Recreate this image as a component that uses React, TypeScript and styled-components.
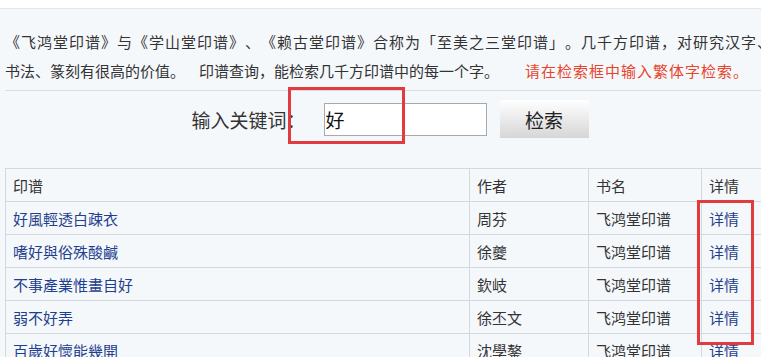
import styled, { createGlobalStyle } from "styled-components";

const GlobalStyle = createGlobalStyle`
  html, body {
    margin: 0;
    padding: 0;
    overflow: hidden;
    background: #f5f8fb;
  }
  body {
    font-family: "Noto Sans CJK SC", "Noto Sans", sans-serif;
    color: #333;
    text-spacing-trim: space-all;
  }
`

const TopBar = styled.div`
  height: 8px;
  overflow: hidden;
  background: #fff;
  border-bottom: 1px solid #dfe6ee;
`

const Title = styled.h2`
  margin: -24px 0 0 62px;
  font-size: 22px;
  line-height: 22px;
  font-weight: bold;
  color: #1d3a6e;
`

const Page = styled.div`
  width: 780px;
  padding: 0 5px;
  box-sizing: border-box;
`

const Intro = styled.div`
  padding: 18px 0 5px;
  font-size: 15px;
  line-height: 29px;
  border-bottom: 1px solid #d9dde2;
`

const IntroLine = styled.span<{ $spread?: boolean }>`
  display: block;
  white-space: nowrap;
  letter-spacing: ${p => (p.$spread ? "1px" : "0")};
`

const Sentence = styled.span<{ $gap: number }>`
  margin-left: ${p => p.$gap}px;
`

const Notice = styled(Sentence)`
  color: #e8442b;
  letter-spacing: 1px;
`

const SearchSection = styled.div`
  position: relative;
  padding: 9px 0 30px;
`

const SearchRow = styled.form`
  display: flex;
  align-items: center;
  justify-content: center;
  height: 38px;
  margin: 0;
`

const Label = styled.label`
  font-size: 19px;
  color: #333;
  margin-right: 18px;
`

const KeywordInput = styled.input`
  width: 163px;
  height: 33px;
  box-sizing: border-box;
  border: 1px solid #a9a9a9;
  background: #fff;
  padding: 0 1px;
  font-size: 19px;
  font-family: "Noto Sans CJK SC", sans-serif;
  color: #111;
  outline: none;
`

const SearchButton = styled.button`
  width: 89px;
  height: 38px;
  margin-left: 13px;
  border: none;
  background: linear-gradient(#ffffff, #d6d6d6);
  font-size: 19px;
  font-family: "Noto Sans CJK SC", sans-serif;
  color: #222;
  padding: 0;
`

const Highlight = styled.div<{ $top: number; $left: number; $w: number; $h: number }>`
  position: absolute;
  top: ${p => p.$top}px;
  left: ${p => p.$left}px;
  width: ${p => p.$w}px;
  height: ${p => p.$h}px;
  border: 3px solid #e33a3f;
  box-sizing: border-box;
  pointer-events: none;
`

const TableWrap = styled.div`
  position: relative;
`

const Table = styled.table`
  width: 100%;
  border-collapse: collapse;
  font-size: 15px;
  table-layout: fixed;
`

const Th = styled.th<{ $w?: number }>`
  width: ${p => (p.$w ? p.$w + "px" : "auto")};
  height: 33px;
  padding: 0 7px;
  border: 1px solid #d3d8de;
  text-align: left;
  font-weight: normal;
  color: #333;
  box-sizing: border-box;
`

const Td = styled.td`
  height: 33px;
  padding: 0 7px;
  border: 1px solid #d3d8de;
  color: #333;
  box-sizing: border-box;
  white-space: nowrap;
`

const CellLink = styled.a`
  color: #1f3f8f;
  text-decoration: none;
`

const rows = [
  { seal: "好風輕透白疎衣", author: "周芬" },
  { seal: "嗜好與俗殊酸鹹", author: "徐夔" },
  { seal: "不事產業惟畫自好", author: "欽岐" },
  { seal: "弱不好弄", author: "徐丕文" },
  { seal: "百歲好懷能幾開", author: "沈學鏊" },
  { seal: "好學", author: "汪啟淑" },
]

export default function App() {
  return (
    <>
      <GlobalStyle/>
      <TopBar>
        <Title>印谱查询</Title>
      </TopBar>
      <Page>
        <Intro>
          <IntroLine $spread>
            《飞鸿堂印谱》与《学山堂印谱》、《赖古堂印谱》合称为「至美之三堂印谱」。几千方印谱，对研究汉字、
          </IntroLine>
          <IntroLine>
            <span>书法、篆刻有很高的价值。</span>
            <Sentence $gap={14}>印谱查询，能检索几千方印谱中的每一个字。</Sentence>
            <Notice $gap={26}>请在检索框中输入繁体字检索。</Notice>
          </IntroLine>
        </Intro>
        <SearchSection>
          <SearchRow onSubmit={e => e.preventDefault()}>
            <Label>输入关键词：</Label>
            <KeywordInput defaultValue="好"/>
            <SearchButton type="submit">检索</SearchButton>
          </SearchRow>
          <Highlight $top={-4} $left={283} $w={117} $h={57}/>
        </SearchSection>
        <TableWrap>
          <Table>
            <thead>
              <tr>
                <Th $w={464}>印谱</Th>
                <Th $w={119}>作者</Th>
                <Th $w={113}>书名</Th>
                <Th>详情</Th>
              </tr>
            </thead>
            <tbody>
              {rows.map(item => (
                <tr key={item.seal}>
                  <Td><CellLink href="#">{item.seal}</CellLink></Td>
                  <Td>{item.author}</Td>
                  <Td>飞鸿堂印谱</Td>
                  <Td><CellLink href="#">详情</CellLink></Td>
                </tr>
              ))}
            </tbody>
          </Table>
          <Highlight $top={32} $left={692} $w={57} $h={145}/>
        </TableWrap>
      </Page>
    </>
  )
}
